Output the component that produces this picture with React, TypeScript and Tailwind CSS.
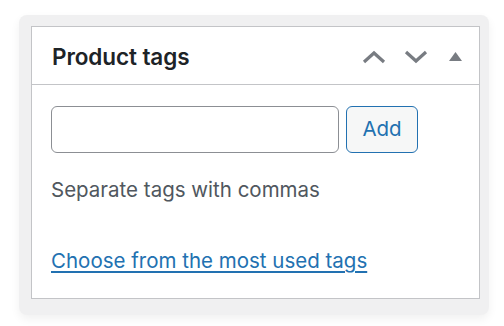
import { useState } from "react";

export default function App() {
	const [tag, setTag] = useState("");

	return (
		<div className="h-[326px] w-[504px] bg-white pt-[15px] pl-[19px] font-['Inter',sans-serif]">
			<div className="h-[300px] w-[470px] rounded-lg bg-[#f0f0f1] pt-[11px] pl-[12px] shadow-[0_4px_10px_rgba(0,0,0,0.06)]">
				<div className="h-[273px] w-[449px] border border-[#c3c4c7] bg-white">
					{/* Header */}
					<div className="flex h-[58px] items-center justify-between border-b border-[#c3c4c7] pr-[14px] pl-[20px]">
						<h2 className="pt-[2px] font-semibold text-[#1d2327] text-[22.5px] tracking-[-0.1px]">
							Product tags
						</h2>
						<div className="flex items-center pt-[2px]">
							<button className="flex h-[30px] w-[26px] items-center justify-center" type="button">
								<svg fill="none" height="14" viewBox="0 0 24 14" width="24">
									<path d="M2 12 L12 3 L22 12" stroke="#787c82" strokeWidth="3.2" />
								</svg>
							</button>
							<button className="ml-[16px] flex h-[30px] w-[26px] items-center justify-center" type="button">
								<svg fill="none" height="14" viewBox="0 0 24 14" width="24">
									<path d="M2 2 L12 11 L22 2" stroke="#787c82" strokeWidth="3.2" />
								</svg>
							</button>
							<button className="ml-[16px] flex h-[30px] w-[20px] items-center justify-center" type="button">
								<svg height="9" viewBox="0 0 13 9" width="13">
									<path d="M6.5 0 L13 9 L0 9 Z" fill="#787c82" />
								</svg>
							</button>
						</div>
					</div>

					{/* Body */}
					<div className="pt-[21px] pl-[19px]">
						<div className="flex items-center">
							<input
								className="h-[47px] w-[288px] rounded-[6px] border border-[#8c8f94] bg-white px-3 text-[20px] outline-none"
								onChange={(e) => setTag(e.target.value)}
								type="text"
								value={tag}
							/>
							<button
								className="ml-[7px] h-[47px] w-[72px] rounded-[6px] border border-[#2271b1] bg-[#f6f7f7] text-[#2271b1] text-[20.5px]"
								type="button"
							>
								Add
							</button>
						</div>
						<p className="mt-[24px] text-[#50575e] text-[20.5px] leading-[26px]">
							Separate tags with commas
						</p>
						<a
							className="mt-[45px] inline-block text-[#2271b1] text-[20.5px] leading-[26px] underline underline-offset-[3px]"
							href="#tags"
						>
							Choose from the most used tags
						</a>
					</div>
				</div>
			</div>
		</div>
	);
}
